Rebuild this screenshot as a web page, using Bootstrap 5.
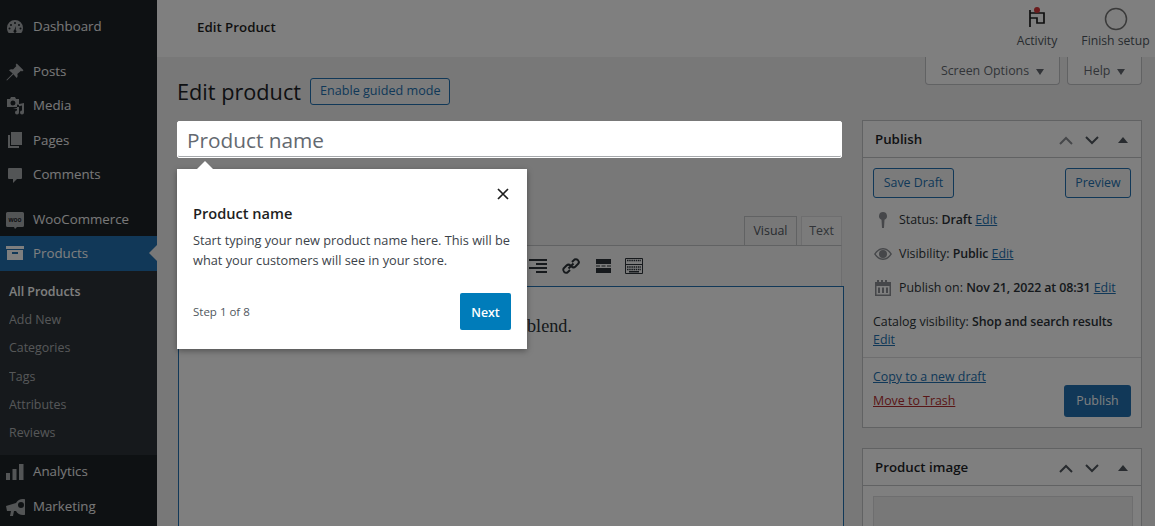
<!DOCTYPE html>
<html lang="en"><head><meta charset="utf-8"><title>Edit product</title>
<link rel="stylesheet" href="https://cdn.jsdelivr.net/npm/bootstrap@5.3.0/dist/css/bootstrap.min.css">
<style>
html,body{height:526px;overflow:hidden}
body{background:#f0f0f1;color:#2c3338;font-family:"Open Sans","Noto Sans",sans-serif;font-size:12.4px;position:relative}
a{color:#2271b1}
.shell{height:526px;overflow:hidden}
.wp-side{width:157px;background:#1d2327;flex:none;padding-top:10px;overflow:hidden}
.side-item{height:34.4px;flex:none;color:#f0f0f1;font-size:13.3px;padding-left:33px;position:relative;display:flex;align-items:center;text-decoration:none}
.side-item:hover{color:#f0f0f1}
.side-item svg{position:absolute;left:5px;top:7px;width:20px;height:20px;fill:#a7aaad}
.side-gap{margin-top:10.6px}
.side-gap-post{margin-top:10.200px}
.side-active,.side-active:hover{background:#2271b1;color:#fff;margin-top:-.7px}
.side-active svg{fill:#fff}
.side-active::after{content:"";position:absolute;right:0;top:9px;border:8px solid transparent;border-right-color:#f0f0f1;border-left:0}
.side-sub{background:#2c3338;padding:7px 0 7.500px}
.side-sub a{display:block;height:28.300px;line-height:28px;padding-left:9px;color:#c3c4c7;opacity:.85;text-decoration:none;font-size:12.4px}
.side-sub a.cur{color:#fff;opacity:1;font-weight:600}
.wp-main{min-width:0;height:526px;overflow:hidden}
.top-bar{height:57px;background:#fff;padding-left:40px}
.top-title{font-size:13.3px;font-weight:600;color:#1e1e1e;margin-top:-2px}
.top-acts{margin-right:-3px}
.top-act{font-size:12.2px;color:#50575e;text-align:center;padding:7px 0 0}
.top-act svg{display:block;margin:0 auto 5px}
.act-narrow{width:72px}
.act-wide{width:85px}
.act-wide svg{margin-bottom:1px}
.tab-row{padding-right:13px;gap:7px}
.scr-tab{height:28px;padding-top:2px;border:1px solid #c3c4c7;border-top:0;border-radius:0 0 4px 4px;background:#fff;color:#646970;display:flex;align-items:center;justify-content:center;gap:7px;font-size:12.4px}
.tab-screen{width:135px}
.tab-help{width:75px}
.caret-d{width:0;height:0;border:4px solid transparent;border-top:6px solid #646970;border-bottom:0}
.title-row{padding-left:20px;margin-top:-11px;height:36px;gap:9px}
.page-h{font-size:21.7px;font-weight:400;color:#1d2327;margin:0}
.wp-btn{border:1px solid #2271b1;color:#2271b1;background:#f6f7f7;border-radius:3px;font-size:12.6px;height:27px;padding:0 9px;display:inline-flex;align-items:center;justify-content:center}
.btn-guide{margin-bottom:2px}
.btn-save{width:81px;height:30px;font-size:12.4px}
.btn-prev{width:66px;height:30px;font-size:12.4px}
.col-wrap{padding:0 13px 0 20px;gap:20px;margin-top:11px}
.col-left{width:665px;flex:none;position:relative}
.col-right{width:280px;flex:none;margin-top:-1px}
.name-field{height:37px;padding:2px 9px 0;background:#fff;border:1px solid #fff;box-shadow:inset 0 -1px 0 #a7aaad;border-radius:2px;font-size:20.8px;color:#646970;display:flex;align-items:center;position:relative;z-index:30}
.ed-tabs{margin-top:58px;gap:4px;height:29px}
.ed-tab{border:1px solid #dcdcde;border-bottom:0;height:29px;background:#f6f7f7;color:#646970;display:flex;align-items:center;justify-content:center;font-size:12.4px;width:41px}
.ed-tab.on{background:#f0f0f1;border-color:#c3c4c7;color:#50575e;width:53px}
.ed-bar{height:41px;margin-left:1px;border:1px solid #dcdcde;border-bottom:0;border-top-color:#c3c4c7;background:#f6f7f7;padding-left:349.500px;gap:14.500px}
.ed-bar svg{display:block;fill:#2c3338}
.ed-body{margin-left:1px;margin-right:-2px;height:260px;border:1px solid #2271b1;background:#fff;font-family:"Liberation Serif",serif;font-size:18.200px;color:#2c3338;padding:26px 0 0 348px}
.meta-box{background:#fff;border:1px solid #c3c4c7}
.meta-box+.meta-box{margin-top:20px}
.meta-head{height:37px;padding:2px 13px 0 12px;border-bottom:1px solid #c3c4c7;font-size:13.3px;font-weight:600;color:#1d2327}
.meta-tools{gap:12px}
.meta-tools svg{display:block}
.tri-up{width:0;height:0;border:5px solid transparent;border-bottom:6px solid #50575e;border-top:0;margin-left:7px}
.pub-btns{padding:10px 10px 0;height:45px}
.pub-row{height:34px;padding-left:10px;gap:6px;display:flex;align-items:center}
.pub-row b,.pub-cat b{font-weight:600;letter-spacing:-.1px}
.pub-ico{width:20px;flex:none;display:flex;justify-content:center}
.pub-ico svg{fill:#8c8f94;display:block}
.pub-cat{padding:8px 10px 0;line-height:18px;height:52px}
.pub-foot{border-top:1px solid #dcdcde;height:70px;padding:10px 10px 0}
.pub-foot a{display:block;margin-bottom:6px;line-height:18px}
.pub-foot a.trash{color:#b32d2e}
.btn-pub{background:#2271b1;color:#fff;border-radius:3px;width:67px;height:32px;display:flex;align-items:center;justify-content:center;font-size:12.4px;margin-top:17px}
.img-slot{margin:10px 8px 0 10px;height:60px;background:#f0f0f1;border:1px solid #dcdcde}
.dim{position:absolute;inset:0;background:rgba(0,0,0,.5);z-index:20}
.tour{position:absolute;left:177px;top:169px;width:350px;height:180px;background:#fff;z-index:40;box-shadow:0 2px 6px rgba(0,0,0,.35);padding:16px 16px 19px;display:flex;flex-direction:column;color:#1e1e1e}
.tour::before{content:"";position:absolute;left:20px;top:-8px;border:8px solid transparent;border-bottom-color:#fff;border-top:0}
.tour-x{align-self:flex-end;height:18px;margin-right:-1px}
.tour-h{font-size:14.600px;font-weight:600;margin-top:0;line-height:20px}
.tour-t{font-size:12.750px;line-height:20px;margin-top:7px;margin-right:-6px;color:#3c434a}
.tour-step{font-size:11.500px;color:#50575e}
.tour-next{background:#007cba;color:#fff;font-weight:600;font-size:12.4px;width:51px;height:37px;padding-top:3px;border-radius:2px;display:flex;align-items:center;justify-content:center}
</style></head>
<body>
<div class="d-flex shell">
 <nav class="wp-side d-flex flex-column">
  <a class="side-item" href="#"><svg viewBox="0 0 20 20"><path d="M10 3a8 8 0 0 0-8 8c0 2 .6 3.700 1.700 5h12.600A8 8 0 0 0 18 11a8 8 0 0 0-8-8zm0 2a1 1 0 1 1 0 2 1 1 0 0 1 0-2zM6 7a1 1 0 1 1 0 2 1 1 0 0 1 0-2zm8 0a1 1 0 1 1 0 2 1 1 0 0 1 0-2zM4.500 10.500a1 1 0 1 1 0 2 1 1 0 0 1 0-2zm11 0a1 1 0 1 1 0 2 1 1 0 0 1 0-2zM11 9l-.3 4a1.500 1.500 0 1 1-1.400 0z" fill-rule="evenodd"/></svg>Dashboard</a>
  <a class="side-item side-gap-post" href="#"><svg viewBox="0 0 20 20"><path d="M11.700 1.500l6.800 6.800-1.500 1.200-1-.8-3.700 3.400c.6 1.500.3 3-.6 4L8.400 12.300 2 18.500l-.6-.6 6.300-6.300L4 8.300c1-1 2.600-1.300 4-.7L11.400 4l-.8-1z"/></svg>Posts</a>
  <a class="side-item" href="#"><svg viewBox="0 0 20 20"><path d="M2 3h3l1-2h4l1 2h3v8H2zm6 1.500a2.500 2.500 0 1 0 0 5 2.500 2.500 0 0 0 0-5zM19 7v9.500a2 2 0 1 1-2-2v-5l-3 .8v6.200a2 2 0 1 1-2-2V13H8l4-1V8.500z" fill-rule="evenodd"/></svg>Media</a>
  <a class="side-item" href="#"><svg viewBox="0 0 20 20"><path d="M6 2h11v13H6zM3 5h2v11h9v2H3z"/></svg>Pages</a>
  <a class="side-item" href="#"><svg viewBox="0 0 20 20"><path d="M4 3h12a1 1 0 0 1 1 1v9a1 1 0 0 1-1 1h-4l-4 4v-4H4a1 1 0 0 1-1-1V4a1 1 0 0 1 1-1z"/></svg>Comments</a>
  <a class="side-item side-gap" href="#"><svg viewBox="0 0 20 20"><path d="M2.500 2h15A1.500 1.500 0 0 1 19 3.500v12a1.500 1.500 0 0 1-1.500 1.500H12l-2 2-1-2H2.500A1.500 1.500 0 0 1 1 15.500v-12A1.500 1.500 0 0 1 2.500 2z"/><text x="10" y="12" text-anchor="middle" font-size="6.500" font-weight="600" fill="#1d2327" font-family="Liberation Sans, sans-serif">woo</text></svg>WooCommerce</a>
  <a class="side-item side-active" href="#"><svg viewBox="0 0 20 20"><path d="M1 3h18v3H1zM2 7h16v10H2zm5 2v2h6V9z" fill-rule="evenodd"/></svg>Products</a>
  <div class="side-sub"><a class="cur" href="#">All Products</a><a href="#">Add New</a><a href="#">Categories</a><a href="#">Tags</a><a href="#">Attributes</a><a href="#">Reviews</a></div>
  <a class="side-item" href="#"><svg viewBox="0 0 20 20"><path d="M1 11h4v7H1zM7.500 7h4v11h-4zM14 2h4.500v16H14z"/></svg>Analytics</a>
  <a class="side-item" href="#"><svg viewBox="0 0 20 20"><path d="M18 2a8 8 0 1 1-7 12H9l-1 5H5l1-5H2L1 9l10-3a8 8 0 0 1 7-4zm-2 3a3 3 0 1 0 0 6 3 3 0 0 0 0-6z" fill-rule="evenodd"/></svg>Marketing</a>
 </nav>
 <main class="wp-main flex-grow-1">
  <header class="top-bar d-flex justify-content-between">
   <div class="top-title align-self-center">Edit Product</div>
   <div class="d-flex top-acts">
    <div class="top-act act-narrow"><svg width="20" height="20" viewBox="0 0 20 20"><path d="M3 3v17M3 6h14v10h-7v-5H3" fill="none" stroke="#1e1e1e" stroke-width="1.700"/><circle cx="10" cy="3" r="3" fill="#d63638"/></svg>Activity</div>
    <div class="top-act act-wide"><svg width="24" height="24" viewBox="0 0 24 24"><circle cx="12" cy="12" r="10.500" fill="none" stroke="#757575" stroke-width="1.500"/></svg>Finish setup</div>
   </div>
  </header>
  <div class="tab-row d-flex justify-content-end">
   <div class="scr-tab tab-screen">Screen Options <span class="caret-d"></span></div>
   <div class="scr-tab tab-help">Help <span class="caret-d"></span></div>
  </div>
  <div class="title-row d-flex align-items-center"><h1 class="page-h">Edit product</h1><span class="wp-btn btn-guide">Enable guided mode</span></div>
  <div class="col-wrap d-flex">
   <div class="col-left">
    <div class="name-field">Product name</div>
    <div class="ed-tabs d-flex justify-content-end"><div class="ed-tab on">Visual</div><div class="ed-tab">Text</div></div>
    <div class="ed-bar d-flex align-items-center">
     <svg width="18" height="14" viewBox="0 0 18 14"><path d="M0 0h18v2H0zM7 4h11v2H7zM0 8h18v2H0zM7 12h11v2H7z"/></svg>
     <svg width="20" height="20" viewBox="0 0 20 20"><path d="M11 6l2.500-2.500a3 3 0 0 1 4 4L14.500 10.500a3 3 0 0 1-4 0M9 14l-2.500 2.500a3 3 0 0 1-4-4L5.500 9.500a3 3 0 0 1 4 0M7.500 12.500l5-5" fill="none" stroke="#2c3338" stroke-width="2"/></svg>
     <svg width="15" height="14" viewBox="0 0 15 14"><path d="M0 0h15v5H0zM0 9h15v5H0zM0 6.500h4v1H0zM5.500 6.500h4v1h-4zM11 6.500h4v1h-4z"/></svg>
     <svg width="18" height="16" viewBox="0 0 18 16"><path d="M.500.500h17v15H.500zM.500 6.500h17" fill="none" stroke="#2c3338"/><path d="M2 2.500h14M2 9h14M2 11.500h14" fill="none" stroke="#2c3338" stroke-width="1.300" stroke-dasharray="1.500 .7"/><path d="M4 13h10v1.500H4z"/></svg>
    </div>
    <div class="ed-body">blend.</div>
   </div>
   <aside class="col-right">
    <section class="meta-box">
     <div class="meta-head d-flex justify-content-between align-items-center"><span>Publish</span>
      <span class="meta-tools d-flex align-items-center">
       <svg width="14" height="9" viewBox="0 0 14 9"><path d="M1 8l6-6 6 6" fill="none" stroke="#8c8f94" stroke-width="2"/></svg>
       <svg width="14" height="9" viewBox="0 0 14 9"><path d="M1 1l6 6 6-6" fill="none" stroke="#50575e" stroke-width="2"/></svg>
       <span class="tri-up"></span></span></div>
     <div class="pub-btns d-flex justify-content-between align-items-start"><span class="wp-btn btn-save">Save Draft</span><span class="wp-btn btn-prev">Preview</span></div>
     <div class="pub-row"><span class="pub-ico"><svg width="10" height="16" viewBox="0 0 10 16"><path d="M5 0a4 4 0 0 1 1.500 7.700L6 16H4l-.5-8.300A4 4 0 0 1 5 0z"/></svg></span><span>Status: <b>Draft</b> <a href="#">Edit</a></span></div>
     <div class="pub-row"><span class="pub-ico"><svg width="18" height="12" viewBox="0 0 18 12"><path d="M9 0c4 0 7 3 9 6-2 3-5 6-9 6s-7-3-9-6c2-3 5-6 9-6zm0 1.500C6 1.500 3.300 3.500 1.700 6 3.300 8.500 6 10.500 9 10.500S14.700 8.500 16.300 6C14.700 3.500 12 1.500 9 1.500zM9 2a4 4 0 1 1 0 8 4 4 0 0 1 0-8z" fill-rule="evenodd"/></svg></span><span>Visibility: <b>Public</b> <a href="#">Edit</a></span></div>
     <div class="pub-row"><span class="pub-ico"><svg width="16" height="16" viewBox="0 0 16 16"><path d="M0 2h2V0h2v2h2V0h2v2h2V0h2v2h4v14H0zm1.500 4v8.500h13V6zM3 7.500h2v5.500H3zM7 7.500h2v5.500H7zM11 7.500h2v5.500h-2z" fill-rule="evenodd"/></svg></span><span>Publish on: <b>Nov 21, 2022 at 08:31</b> <a href="#">Edit</a></span></div>
     <div class="pub-cat">Catalog visibility: <b>Shop and search results</b><br><a href="#">Edit</a></div>
     <div class="pub-foot d-flex justify-content-between"><div><a href="#">Copy to a new draft</a><a href="#" class="trash">Move to Trash</a></div><span class="btn-pub">Publish</span></div>
    </section>
    <section class="meta-box">
     <div class="meta-head d-flex justify-content-between align-items-center"><span>Product image</span>
      <span class="meta-tools d-flex align-items-center">
       <svg width="14" height="9" viewBox="0 0 14 9"><path d="M1 8l6-6 6 6" fill="none" stroke="#50575e" stroke-width="2"/></svg>
       <svg width="14" height="9" viewBox="0 0 14 9"><path d="M1 1l6 6 6-6" fill="none" stroke="#50575e" stroke-width="2"/></svg>
       <span class="tri-up"></span></span></div>
     <div class="img-slot"></div>
    </section>
   </aside>
  </div>
 </main>
</div>
<div class="dim"></div>
<div class="tour">
 <svg class="tour-x" width="18" height="18" viewBox="0 0 18 18"><path d="M4 4l10 10M14 4L4 14" stroke="#1e1e1e" stroke-width="1.700" fill="none"/></svg>
 <div class="tour-h">Product name</div>
 <div class="tour-t">Start typing your new product name here. This will be what your customers will see in your store.</div>
 <div class="d-flex justify-content-between align-items-center mt-auto"><span class="tour-step">Step 1 of 8</span><span class="tour-next">Next</span></div>
</div>
</body></html>
